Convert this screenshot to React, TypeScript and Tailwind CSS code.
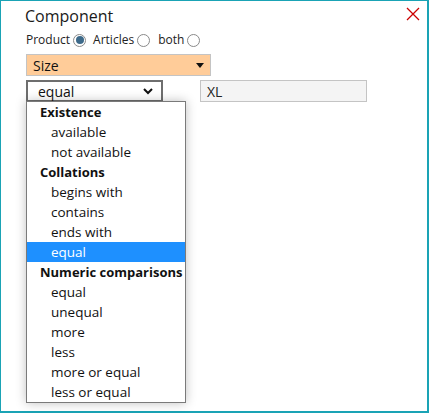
import { useState } from 'react';

const groups = [
  { title: 'Existence', items: ['available', 'not available'] },
  { title: 'Collations', items: ['begins with', 'contains', 'ends with', 'equal'] },
  { title: 'Numeric comparisons', items: ['equal', 'unequal', 'more', 'less', 'more or equal', 'less or equal'] },
];

function Radio({ checked }: { checked?: boolean }) {
  return (
    <span className="ml-[3px] inline-flex h-[13px] w-[13px] items-center justify-center rounded-full border border-[#8a8a8a] bg-white">
      {checked && <span className="h-[8px] w-[8px] rounded-full bg-[#3d6a8a]" />}
    </span>
  );
}

export default function App() {
  const [mode] = useState('Product');

  return (
    <div className="h-[413px] w-[429px] overflow-hidden bg-white" style={{ fontFamily: '"Open Sans", "Liberation Sans", sans-serif' }}>
      <div className="relative h-full w-full border-t border-l border-r-2 border-b-2 border-[#1aa3b5] pl-[25px] pt-[4px]">
        {/* Close */}
        <button className="absolute right-[7px] top-[6px] flex h-[14px] w-[14px] items-center justify-center">
          <svg width="14" height="14" viewBox="0 0 14 14">
            <path d="M1 1 L13 13 M13 1 L1 13" stroke="#cc0000" strokeWidth="1.3" fill="none" />
          </svg>
        </button>

        <div className="-ml-[1px] text-[16px] leading-[22px] text-[#1a1a1a]">Component</div>

        {/* Radios */}
        <div className="mt-[5px] flex items-center text-[12px] leading-[16px] text-[#222]">
          <span>Product</span>
          <Radio checked={mode === 'Product'} />
          <span className="ml-[7px]">Articles</span>
          <Radio />
          <span className="ml-[8px]">both</span>
          <Radio />
        </div>

        {/* Size select */}
        <div className="mt-[6px] flex h-[22px] w-[185px] items-center justify-between border border-[#c4c4c4] bg-[#ffcc99] pl-[6px] pr-[6px] text-[14px] text-[#111]">
          <span>Size</span>
          <svg width="8" height="5" viewBox="0 0 8 5">
            <path d="M0 0 L8 0 L4 5 Z" fill="#111" />
          </svg>
        </div>

        {/* Operator + value */}
        <div className="relative mt-[4px] flex items-start">
          <div className="flex h-[22px] w-[137px] items-center justify-between border-2 border-[#6e6e6e] bg-white pl-[10px] pr-[8px] text-[14px] text-[#111]">
            <span>equal</span>
            <svg width="10" height="7" viewBox="0 0 10 7">
              <path d="M1 1 L5 5 L9 1" stroke="#111" strokeWidth="2" fill="none" />
            </svg>
          </div>
          <div className="ml-[37px] flex h-[22px] w-[167px] items-center border border-[#c4c4c4] bg-[#f4f4f4] pl-[6px] text-[14px] text-[#222]">
            XL
          </div>

          {/* Dropdown list */}
          <div className="absolute left-0 top-[21px] w-[160px] border border-[#7a7a7a] bg-white shadow-[0_0_10px_rgba(0,0,0,0.25)]">
            {groups.map((g) => (
              <div key={g.title}>
                <div className="h-[20px] pl-[13px] text-[13px] font-bold leading-[20px] text-[#111]">{g.title}</div>
                {g.items.map((it, i) => {
                  const sel = g.title === 'Collations' && it === 'equal';
                  return (
                    <div
                      key={i}
                      className={`h-[20px] pl-[24px] text-[13.5px] leading-[20px] ${sel ? 'bg-[#1e90ff] text-white' : 'text-[#111]'}`}
                    >
                      {it}
                    </div>
                  );
                })}
              </div>
            ))}
          </div>
        </div>
      </div>
    </div>
  );
}
